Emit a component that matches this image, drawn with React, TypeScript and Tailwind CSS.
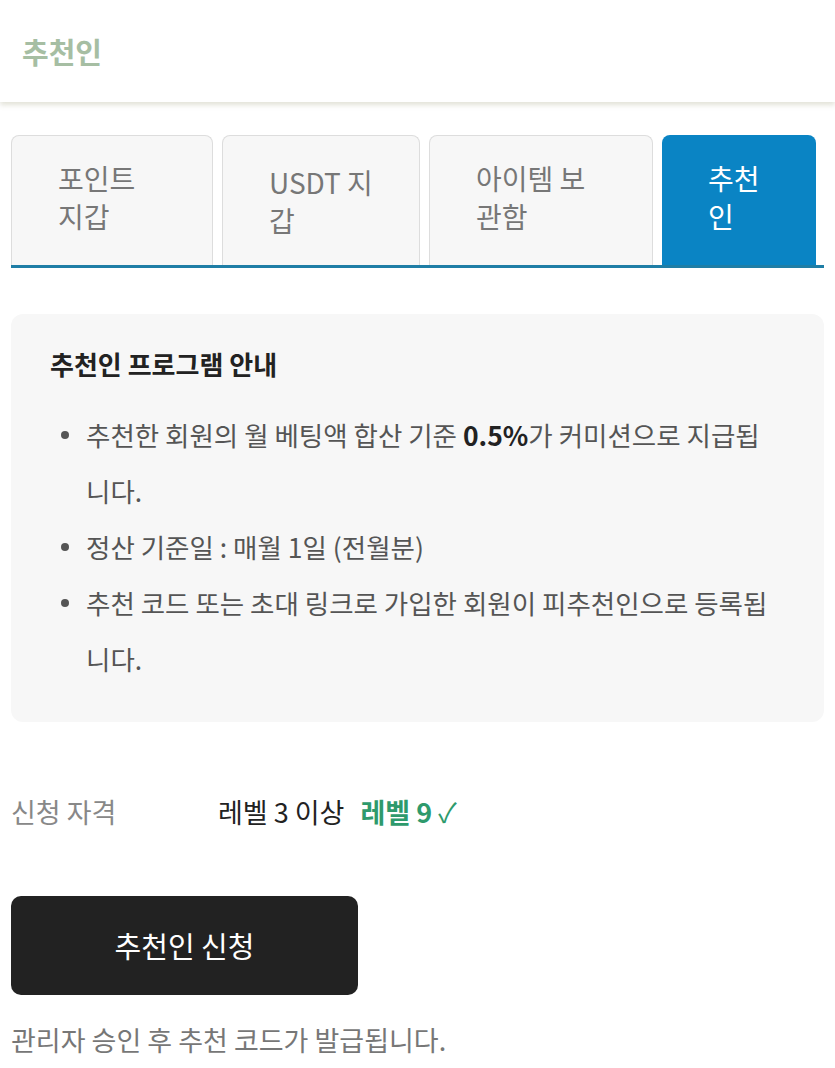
const font = { fontFamily: '"Noto Sans CJK KR", "Noto Sans", sans-serif' };

const tabs = [
  { label: "포인트 지갑", width: "w-[202px]", inner: "w-[96px] pb-[7px]" },
  { label: "USDT 지갑", width: "w-[198px]", inner: "w-[120px]" },
  { label: "아이템 보관함", width: "w-[224px]", inner: "w-[128px] pb-[7px]" },
];

const rules = [
  <>추천한 회원의 월 베팅액 합산 기준 <b className="font-bold text-[#222]">0.5%</b>가 커미션으로 지급됩니다.</>,
  <>정산 기준일 : 매월 1일 (전월분)</>,
  <>추천 코드 또는 초대 링크로 가입한 회원이 피추천인으로 등록됩니다.</>,
];

const App = () => {
  return (
    <div className="min-h-screen w-[835px] bg-white" style={font}>
      {/* 상단 헤더 */}
      <header className="h-[102px] flex items-center px-[22px] bg-white shadow-[0_3px_5px_rgba(140,140,100,0.25)]">
        <h1 className="text-[29px] font-bold text-[#a6bea3] leading-none">추천인</h1>
      </header>

      <div className="px-[11px]">
        {/* 탭 */}
        <div className="mt-[33px] flex items-end gap-[9px] border-b-[3px] border-[#1f7ea6]">
          {tabs.map((t) => (
            <div
              key={t.label}
              className={`${t.width} h-[130px] flex items-center pl-[46px] bg-[#f7f7f7] border border-b-0 border-[#dddddd] rounded-t-[8px] text-[28px] leading-[38px] text-[#777]`}
            >
              <div className={t.inner}>{t.label}</div>
            </div>
          ))}
          <div className="w-[154px] h-[130px] flex items-center pl-[46px] bg-[#0a84c4] rounded-t-[8px] text-[28px] leading-[38px] text-white">
            <div className="w-[62px] pb-[7px]">추천인</div>
          </div>
        </div>

        {/* 안내 박스 */}
        <section className="mt-[46px] bg-[#f7f7f7] rounded-[12px] pt-[34px] pb-[35px] pl-[39px] pr-[41px]">
          <h2 className="text-[26px] font-bold leading-[32px] text-[#222]">추천인 프로그램 안내</h2>
          <ul className="mt-[27px]">
            {rules.map((r, i) => (
              <li key={i} className="flex text-[26.5px] leading-[56px] text-[#555]">
                <span className="w-[36px] shrink-0 h-[56px] flex items-center pl-[11px]">
                  <span className="w-[8px] h-[8px] rounded-full bg-[#555]" />
                </span>
                <span className="flex-1">{r}</span>
              </li>
            ))}
          </ul>
        </section>

        {/* 신청 자격 */}
        <div className="mt-[74px] flex items-center text-[27px] leading-[32px]">
          <span className="w-[207px] text-[#888]">신청 자격</span>
          <span className="text-[#222]">레벨 3 이상</span>
          <span className="ml-[16px] font-bold text-[#2e9a6c]">
            레벨 9 <span className="font-normal">✓</span>
          </span>
        </div>

        <button className="mt-[68px] w-[347px] h-[99px] rounded-[10px] bg-[#222] text-white text-[29px]">
          추천인 신청
        </button>

        <p className="mt-[29px] text-[27px] leading-[32px] text-[#777]">
          관리자 승인 후 추천 코드가 발급됩니다.
        </p>
      </div>
    </div>
  );
};

export default App;
